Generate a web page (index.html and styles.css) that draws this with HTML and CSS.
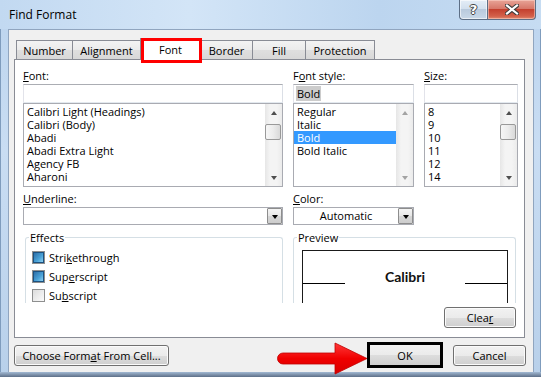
FILE: index.html
```html
<!DOCTYPE html>
<html>
<head>
<meta charset="utf-8">
<title>Find Format</title>
<link rel="stylesheet" href="styles.css">
</head>
<body>
<div class="window">
  <div class="titlebar">
    <div class="title">Find Format</div>
    <div class="caption-btns">
      <div class="cap-btn help"><span class="qmark">?</span></div>
      <div class="cap-btn close">
        <svg width="14" height="11" viewBox="0 0 14 11">
          <path d="M2 1.5 L12 9.5 M12 1.5 L2 9.5" stroke="#3b3b3b" stroke-width="4.2" stroke-linecap="square" fill="none"/>
          <path d="M2 1.5 L12 9.5 M12 1.5 L2 9.5" stroke="#ffffff" stroke-width="2.2" stroke-linecap="square" fill="none"/>
        </svg>
      </div>
    </div>
  </div>
  <div class="client">
    <div class="tabs">
      <div class="tab w-number">Number</div>
      <div class="tab w-align">Alignment</div>
      <div class="tab active w-font">Font</div>
      <div class="tab w-border">Border</div>
      <div class="tab w-fill">Fill</div>
      <div class="tab w-prot">Protection</div>
    </div>
    <div class="panel">
      <div class="grid">
        <div class="lbl col1"><u>F</u>ont:</div>
        <div class="lbl col2">F<u>o</u>nt style:</div>
        <div class="lbl col3"><u>S</u>ize:</div>

        <div class="input col1"></div>
        <div class="input col2"><span class="sel-inactive">Bold</span></div>
        <div class="input col3"></div>

        <div class="list col1">
          <div class="items">
            <div class="item">Calibri Light (Headings)</div>
            <div class="item">Calibri (Body)</div>
            <div class="item">Abadi</div>
            <div class="item">Abadi Extra Light</div>
            <div class="item">Agency FB</div>
            <div class="item">Aharoni</div>
          </div>
          <div class="scrollbar">
            <div class="sb-btn"><span class="tri-up"></span></div>
            <div class="sb-track"><div class="thumb"></div></div>
            <div class="sb-btn"><span class="tri-down"></span></div>
          </div>
        </div>
        <div class="list col2">
          <div class="items">
            <div class="item">Regular</div>
            <div class="item">Italic</div>
            <div class="item selected">Bold</div>
            <div class="item">Bold Italic</div>
          </div>
          <div class="scrollbar disabled">
            <div class="sb-btn"><span class="tri-up"></span></div>
            <div class="sb-track"></div>
            <div class="sb-btn"><span class="tri-down"></span></div>
          </div>
        </div>
        <div class="list col3">
          <div class="items">
            <div class="item">8</div>
            <div class="item">9</div>
            <div class="item">10</div>
            <div class="item">11</div>
            <div class="item">12</div>
            <div class="item">14</div>
          </div>
          <div class="scrollbar">
            <div class="sb-btn"><span class="tri-up"></span></div>
            <div class="sb-track"><div class="thumb"></div></div>
            <div class="sb-btn"><span class="tri-down"></span></div>
          </div>
        </div>

        <div class="lbl col1 row4"><u>U</u>nderline:</div>
        <div class="lbl col2 row4"><u>C</u>olor:</div>

        <div class="combo col1 row5">
          <div class="combo-text"></div>
          <div class="dd-btn"><span class="tri-dd"></span></div>
        </div>
        <div class="combo col2 row5">
          <div class="combo-text center">Automatic</div>
          <div class="dd-btn"><span class="tri-dd"></span></div>
        </div>

        <fieldset class="group col1 row6">
          <legend>Effects</legend>
          <div class="check-row"><span class="cb mixed"></span><span class="cb-text">Stri<u>k</u>ethrough</span></div>
          <div class="check-row"><span class="cb mixed"></span><span class="cb-text">Sup<u>e</u>rscript</span></div>
          <div class="check-row"><span class="cb"></span><span class="cb-text">Su<u>b</u>script</span></div>
        </fieldset>
        <fieldset class="group preview-group row6">
          <legend>Preview</legend>
          <div class="preview-box">
            <div class="preview-row">
              <span class="pline"></span>
              <span class="ptext">Calibri</span>
              <span class="pline"></span>
            </div>
          </div>
        </fieldset>

        <div class="clear-cell row7">
          <button class="btn clear">Clea<u>r</u></button>
        </div>
      </div>
    </div>
    <div class="footer">
      <button class="btn choose">Choose Form<u>a</u>t From Cell...</button>
      <button class="btn ok">OK</button>
      <button class="btn cancel">Cancel</button>
    </div>
  </div>
  <div class="bottom-frame"></div>
  <svg class="arrow" width="94" height="34" viewBox="0 0 94 34">
    <defs>
      <linearGradient id="ag" x1="0" y1="0" x2="0" y2="1">
        <stop offset="0" stop-color="#ff3a3a"/>
        <stop offset="0.5" stop-color="#f00000"/>
        <stop offset="1" stop-color="#d80000"/>
      </linearGradient>
    </defs>
    <path d="M7 11 H59 V1 L91 16.5 L59 32 V22 H7 A5.5 5.5 0 0 1 7 11 Z" fill="url(#ag)" stroke="#c00000" stroke-width="0.8"/>
  </svg>
</div>
</body>
</html>
```

FILE: styles.css
```css
* { box-sizing: border-box; }
html, body { margin: 0; padding: 0; }
body {
  width: 541px;
  height: 377px;
  overflow: hidden;
  font-family: "Open Sans", "Noto Sans", sans-serif;
  font-size: 11px;
  color: #000;
}
u { text-decoration: underline; text-underline-offset: 1px; }

.window {
  position: relative;
  width: 541px;
  height: 377px;
  display: flex;
  flex-direction: column;
  background: linear-gradient(to bottom, #bcd4ee, #c9ddf3 40%, #b8d0ea);
  box-shadow: inset 1px 0 #7f9cbd, inset -1px 0 #7f9cbd;
}

/* title bar */
.titlebar {
  height: 29px;
  flex: none;
  display: flex;
  align-items: flex-start;
  background: linear-gradient(to right, #c2d9f1, #d3e5f7 35%, #bcd5ef 70%, #c6dcf2);
}
.title {
  margin: 7px 0 0 9px;
  font-size: 12px;
  line-height: 16px;
  color: #000;
}
.caption-btns {
  margin-left: auto;
  margin-right: 5px;
  display: flex;
  height: 20px;
}
.cap-btn {
  height: 20px;
  display: flex;
  align-items: center;
  justify-content: center;
  border: 1px solid #5d6f86;
  border-top: none;
}
.help {
  width: 28px;
  border-radius: 0 0 0 4px;
  border-right: none;
  background: linear-gradient(to bottom, #e4edf7, #d3e0ee 45%, #b9cadd 50%, #c9d8e8);
  box-shadow: inset 0 0 0 1px rgba(255,255,255,0.6);
}
.qmark {
  font-family: "DejaVu Sans", sans-serif;
  font-weight: bold;
  font-size: 13px;
  line-height: 13px;
  color: #fff;
  text-shadow: 1px 0 #444, -1px 0 #444, 0 1px #444, 0 -1px #444;
}
.close {
  width: 49px;
  border-radius: 0 0 4px 0;
  background: linear-gradient(to bottom, #e8a497, #d7786a 45%, #c4412f 50%, #d3604a 85%, #e08a6f);
  box-shadow: inset 0 0 0 1px rgba(255,220,210,0.5);
}

/* client */
.client {
  flex: 1;
  margin: 0 7px 0 8px;
  background: #f0f0f0;
  border: 1px solid #90a5bf;
  border-bottom: none;
  display: flex;
  flex-direction: column;
  padding-top: 8px;
}
.bottom-frame {
  height: 5px;
  flex: none;
  background: linear-gradient(to bottom, #a2b9d3, #5d6f88);
}

/* tabs */
.tabs {
  display: flex;
  align-items: flex-end;
  height: 21px;
  padding-left: 7px;
}
.tab {
  height: 19px;
  border: 1px solid #898c95;
  border-bottom: none;
  margin-left: -1px;
  text-align: center;
  padding-top: 2px;
  line-height: 15px;
  background: linear-gradient(to bottom, #f3f3f3, #ebebeb 50%, #dfdfdf 51%, #d8d8d8);
}
.tab:first-child { margin-left: 0; }
.w-number { width: 57px; }
.w-align { width: 69px; }
.w-font { width: 61px; }
.w-border { width: 53px; }
.w-fill { width: 54px; }
.w-prot { width: 70px; }
.tab.active {
  position: relative;
  z-index: 2;
  height: 22px;
  margin-bottom: -1px;
  background: #fff;
  padding-top: 3px;
}
.tab.active::after {
  content: "";
  position: absolute;
  left: 0px;
  top: -1px;
  right: -2px;
  bottom: -3px;
  border: 3px solid #ff0000;
}

/* panel */
.panel {
  margin: 0 8px 0 5px;
  height: 279px;
  background: #fff;
  border: 1px solid #898c95;
  padding: 8px 0 0 8px;
  position: relative;
  z-index: 1;
}
.grid {
  display: grid;
  grid-template-columns: 260px 121px 94px;
  grid-template-rows: 16px 19px 88px 16px 23px 77px 21px;
  column-gap: 10px;
}
.col1 { grid-column: 1; }
.col2 { grid-column: 2; }
.col3 { grid-column: 3; }
.row4 { grid-row: 4; }
.row5 { grid-row: 5; }
.row6 { grid-row: 6; }
.row7 { grid-row: 7; }
.lbl {
  line-height: 15px;
  align-self: start;
}
.input {
  border: 1px solid #abadb3;
  border-color: #abadb3 #dbdfe6 #e3e9ef #e2e3ea;
  height: 19px;
  padding: 1px 2px;
  line-height: 15px;
  background: #fff;
}
.sel-inactive {
  background: #cccccc;
  padding: 0 1px;
}
.list {
  height: 84px;
  border: 1px solid #a9abb2;
  display: flex;
  background: #fff;
  overflow: hidden;
}
.items {
  flex: 1;
  padding-top: 1px;
}
.item {
  height: 13px;
  line-height: 13px;
  padding-left: 3px;
  white-space: nowrap;
}
.item.selected {
  background: #3399ff;
  color: #fff;
}
.scrollbar {
  width: 17px;
  flex: none;
  display: flex;
  flex-direction: column;
  background: linear-gradient(to right, #e6e6e6, #f4f4f4 30%, #f4f4f4 70%, #ebebeb);
}
.sb-btn {
  height: 17px;
  display: flex;
  align-items: center;
  justify-content: center;
}
.sb-track { flex: 1; padding-top: 3px; }
.thumb {
  width: 16px;
  height: 16px;
  border: 1px solid #999;
  border-radius: 2px;
  background: linear-gradient(to right, #f6f6f6, #ececec 50%, #d9d9d9);
}
.tri-up, .tri-down {
  width: 0; height: 0;
  border-left: 3.5px solid transparent;
  border-right: 3.5px solid transparent;
}
.tri-up { border-bottom: 4px solid #4f4f4f; }
.tri-down { border-top: 4px solid #4f4f4f; }
.scrollbar.disabled .tri-up { border-bottom-color: #a3a3a3; }
.scrollbar.disabled .tri-down { border-top-color: #a3a3a3; }

.combo {
  height: 18px;
  border: 1px solid #a9abb2;
  background: #fff;
  display: flex;
  align-self: start;
}
.combo-text { flex: 1; line-height: 16px; padding-left: 3px; }
.combo-text.center { text-align: center; padding-left: 0; }
.dd-btn {
  width: 15px;
  border: 1px solid #8d8d8d;
  border-radius: 1px;
  background: linear-gradient(to bottom, #f4f4f4, #e6e6e6 50%, #d6d6d6 51%, #cdcdcd);
  display: flex;
  align-items: center;
  justify-content: center;
}
.tri-dd {
  width: 0; height: 0;
  border-left: 3.5px solid transparent;
  border-right: 3.5px solid transparent;
  border-top: 4px solid #000;
  margin-top: 1px;
}

/* group boxes */
.group {
  margin: 0;
  padding: 0;
  height: 73px;
  border: 1px solid #d5dfe5;
  border-bottom: none;
  border-radius: 3px 3px 0 0;
  overflow: hidden;
  min-width: 0;
  align-self: start;
}
.group legend {
  margin-left: 3px;
  padding: 0 1px;
  line-height: 15px;
}
.col1.group { margin-left: 2px; }
.check-row {
  height: 19px;
  display: flex;
  align-items: center;
  gap: 4px;
  padding-left: 6px;
}
.check-row:first-of-type { margin-top: 3px; }
.cb-text { line-height: 13px; }
.cb {
  width: 13px;
  height: 13px;
  border: 1px solid #8e8f8f;
  background: linear-gradient(135deg, #dcdcdc, #fbfbfb);
  display: flex;
  align-items: center;
  justify-content: center;
  flex: none;
}
.cb.mixed::before {
  content: "";
  width: 9px;
  height: 9px;
  border: 1px solid #1c5180;
  background: linear-gradient(135deg, #2d6fa8, #4aa3d8 60%, #8fd0f0);
}
.preview-group {
  grid-column: 2 / 4;
  margin-right: 2px;
}
.preview-box {
  margin: 5px 7px 0 8px;
  height: 60px;
  border: 1px solid #1a1a1a;
  border-bottom: none;
}
.preview-row {
  margin-top: 18px;
  height: 15px;
  display: flex;
  align-items: flex-start;
}
.pline {
  width: 42px;
  height: 15px;
  border-bottom: 1px solid #000;
  flex: none;
}
.ptext {
  flex: 1;
  text-align: center;
  font-family: "Lato", sans-serif;
  font-weight: bold;
  font-size: 14px;
  line-height: 15px;
  color: #111;
}
.clear-cell {
  grid-column: 2 / 4;
  display: flex;
  justify-content: flex-end;
  padding-right: 2px;
}

/* buttons */
.btn {
  font-family: inherit;
  font-size: 11px;
  color: #000;
  height: 21px;
  border: 1px solid #707070;
  border-radius: 3px;
  background: linear-gradient(to bottom, #f2f2f2, #ebebeb 50%, #dddddd 51%, #cfcfcf);
  box-shadow: inset 0 0 0 1px #fbfbfb;
  padding: 0;
  line-height: 17px;
  margin: 0;
}
.clear { width: 72px; }
.footer {
  flex: 1;
  display: flex;
  align-items: center;
  padding: 0 7px 0 5px;
}
.choose { width: 155px; }
.ok {
  margin-left: auto;
  width: 76px;
  height: 26px;
  border: 3px solid #000;
  border-radius: 0;
  box-shadow: none;
}
.cancel { width: 73px; margin-left: 10px; }

.arrow {
  position: absolute;
  left: 276px;
  top: 342px;
}
```
